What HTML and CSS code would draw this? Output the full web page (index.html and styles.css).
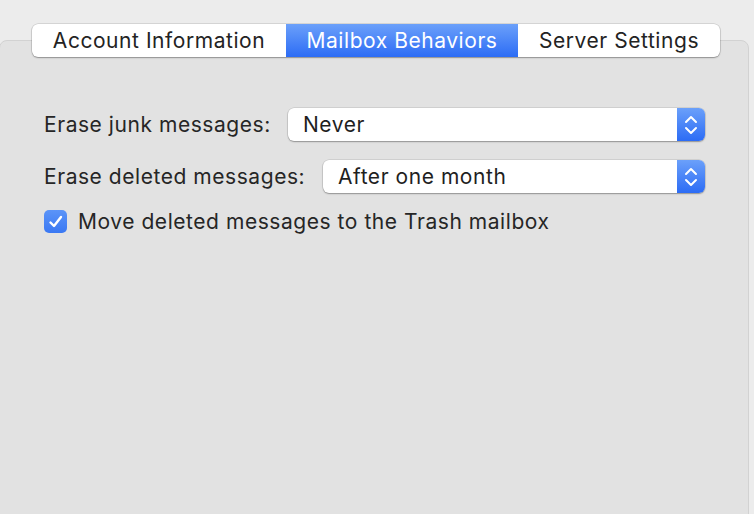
FILE: index.html
```html
<!DOCTYPE html>
<html lang="en">
<head>
<meta charset="UTF-8">
<meta name="viewport" content="width=device-width, initial-scale=1.0">
<title>Mailbox Behaviors</title>
<link rel="stylesheet" href="styles.css">
</head>
<body>

<div class="window">
    <div class="tabs">
        <div class="tab tab-account">Account Information</div>
        <div class="tab tab-mailbox active">Mailbox Behaviors</div>
        <div class="tab tab-server">Server Settings</div>
    </div>

    <div class="panel">
        <div class="row">
            <label class="label">Erase junk messages:</label>
            <div class="popup popup-junk">
                <span class="popup-value">Never</span>
                <span class="popup-arrows">
                    <svg width="14" height="24" viewBox="0 0 14 24"><path d="M2 9 L7 4 L12 9 M2 15 L7 20 L12 15" fill="none" stroke="#fff" stroke-width="2" stroke-linecap="round" stroke-linejoin="round"/></svg>
                </span>
            </div>
        </div>

        <div class="row">
            <label class="label">Erase deleted messages:</label>
            <div class="popup popup-deleted">
                <span class="popup-value">After one month</span>
                <span class="popup-arrows">
                    <svg width="14" height="24" viewBox="0 0 14 24"><path d="M2 9 L7 4 L12 9 M2 15 L7 20 L12 15" fill="none" stroke="#fff" stroke-width="2" stroke-linecap="round" stroke-linejoin="round"/></svg>
                </span>
            </div>
        </div>

        <div class="row check-row">
            <span class="checkbox">
                <svg width="18" height="18" viewBox="0 0 18 18"><path d="M3.5 9.5 L7 13 L14 4" fill="none" stroke="#fff" stroke-width="2.4" stroke-linecap="round" stroke-linejoin="round"/></svg>
            </span>
            <span class="check-label">Move deleted messages to the Trash mailbox</span>
        </div>
    </div>
</div>

</body>
</html>
```

FILE: styles.css
```css
body {
    margin: 0;
    background-color: #ececec;
    font-family: Inter, "Liberation Sans", sans-serif;
    color: #262626;
    overflow: hidden;
}
.window {
    padding-top: 24px;
    height: 490px;
}
.tabs {
    position: relative;
    z-index: 1;
    display: flex;
    width: 688px;
    height: 33px;
    margin-left: 32px;
    background-color: #fff;
    border-radius: 6px;
    box-shadow: 0 0 0 0.5px rgba(0, 0, 0, 0.18), 0 1px 1.5px rgba(0, 0, 0, 0.3);
    overflow: hidden;
}
.tab {
    display: flex;
    align-items: center;
    justify-content: center;
    font-size: 21px;
    letter-spacing: 0.55px;
    color: #232323;
}
.tab-account {
    width: 254px;
}
.tab-mailbox {
    width: 232px;
}
.tab-server {
    width: 202px;
}
.tab.active {
    color: #fff;
    background: linear-gradient(#6ba0fa, #2c6cf5);
}
.panel {
    margin-top: -17px;
    margin-left: -1px;
    width: 750px;
    height: 480px;
    background-color: #e2e2e2;
    border: 1px solid #d2d2d2;
    border-radius: 8px 8px 0 0;
    padding: 67px 0 0 44px;
    box-sizing: border-box;
}
.row {
    display: flex;
    align-items: center;
    height: 33px;
    margin-bottom: 19px;
}
.label {
    flex: none;
    white-space: nowrap;
    font-size: 21px;
    letter-spacing: 0.55px;
    width: 244px;
    color: #262626;
}
.popup {
    flex: none;
    display: flex;
    height: 33px;
    background-color: #fff;
    border-radius: 6px;
    box-shadow: 0 0 0 0.5px rgba(0, 0, 0, 0.15), 0 1px 1.5px rgba(0, 0, 0, 0.3);
    overflow: hidden;
}
.popup-junk {
    width: 417px;
}
.popup-deleted {
    width: 382px;
    margin-left: 35px;
}
.popup-value {
    flex: 1;
    display: flex;
    align-items: center;
    padding-left: 15px;
    font-size: 21px;
    letter-spacing: 0.55px;
    color: #1f1f1f;
}
.popup-arrows {
    width: 28px;
    display: flex;
    align-items: center;
    justify-content: center;
    background: linear-gradient(#6ba0fa, #2c6cf5);
}
.check-row {
    height: 23px;
    margin-top: -2px;
}
.checkbox {
    flex: none;
    width: 23px;
    height: 23px;
    border-radius: 5px;
    background: linear-gradient(#5b94f8, #3a78f3);
    display: flex;
    align-items: center;
    justify-content: center;
    margin-right: 11px;
}
.check-label {
    white-space: nowrap;
    font-size: 21px;
    letter-spacing: 0.55px;
    color: #262626;
}
```
